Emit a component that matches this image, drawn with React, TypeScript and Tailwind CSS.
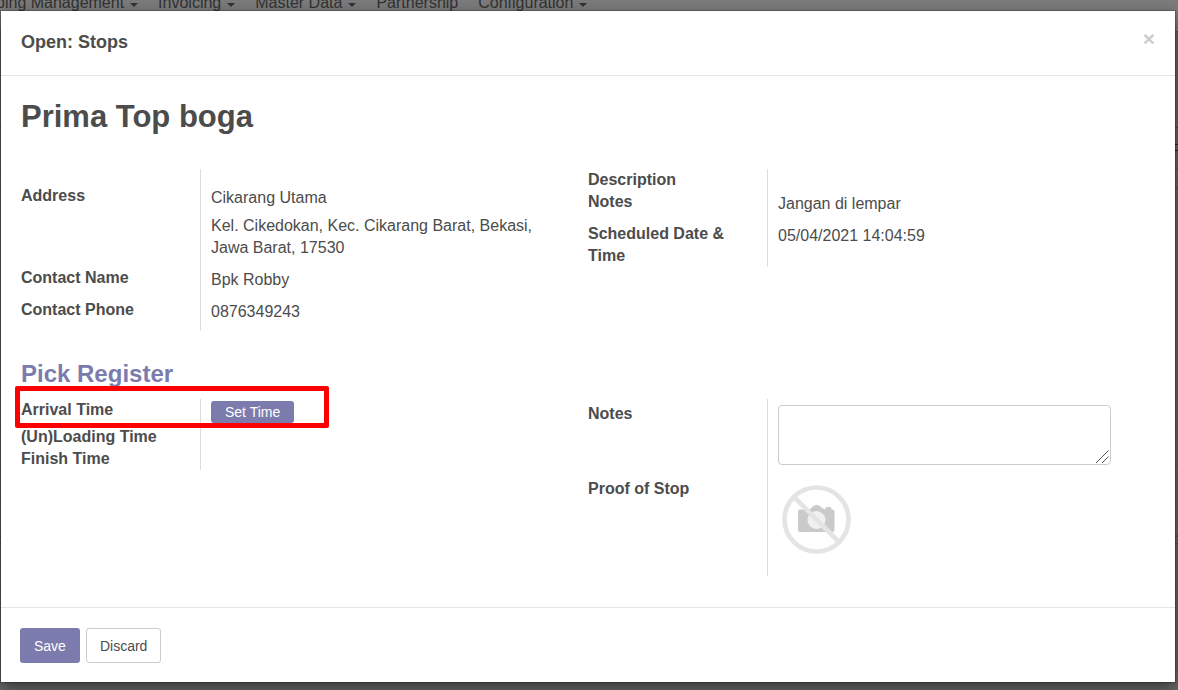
import type { ReactNode } from "react";

const MENU = [
  { name: "Shipping Management", caret: true },
  { name: "Invoicing", caret: true },
  { name: "Master Data", caret: true },
  { name: "Partnership", caret: false },
  { name: "Configuration", caret: true },
];

function BackgroundPage() {
  return (
    <div className="absolute inset-0 overflow-hidden bg-[#cfcfcf]" aria-hidden="true">
      <nav className="-mt-2 -ml-9 flex h-10 items-start gap-5 border-b border-[#b5b5b5] bg-[#f8f8f8] text-[16px] leading-[22px] whitespace-nowrap text-[#666]">
        {MENU.map((item) => (
          <a key={item.name} href="#" tabIndex={-1} className="flex items-center gap-[6px]">
            {item.name}
            {item.caret && (
              <span className="mt-1 border-x-4 border-t-4 border-x-transparent border-t-[#666]" />
            )}
          </a>
        ))}
      </nav>
      <div className="h-24 border-b border-[#999]" />
      <div className="h-4" />
      <div className="flex h-[7px] justify-end">
        <div className="w-[3px] border-y border-[#555]" />
      </div>
      <div className="h-[18px] border-b border-[#aaa]" />
      <div className="h-5 border-b border-[#999]" />
      <div className="h-60 border-b border-[#b5b5b5]" />
      <div className="h-9 border-b border-[#b5b5b5]" />
      <div className="h-9 border-b border-[#b5b5b5]" />
      <div className="h-9 border-b-2 border-[#aaa]" />
      <div className="h-[7px] border-b border-[#aaa]" />
      <div className="h-5 border-b border-[#b5b5b5]" />
      <div className="h-6 border-b border-[#b5b5b5]" />
    </div>
  );
}

function Row({
  label,
  htmlFor,
  labelClass = "pt-[5px]",
  valueClass = "pt-[7px] pb-[3px]",
  children,
}: {
  label: string;
  htmlFor?: string;
  labelClass?: string;
  valueClass?: string;
  children?: ReactNode;
}) {
  return (
    <div className="grid grid-cols-[179px_minmax(0,1fr)]">
      <div className={`pr-10 font-bold whitespace-pre-line ${labelClass}`}>
        {htmlFor ? <label htmlFor={htmlFor}>{label}</label> : label}
      </div>
      <div className={`border-l border-[#ddd] pl-[10px] ${valueClass}`}>{children}</div>
    </div>
  );
}

function NoPhoto() {
  return (
    <svg width="70" height="70" viewBox="0 0 70 70" role="img" aria-label="No photo">
      <path
        d="M18 24.5h8.5c3.500-.5 4-4.500 8-4.500s5 4 9 4.500V23.500q0-1.500 1.500-1.500h3q1.500 0 1.500 1.500v1h1q2 0 2 2V45q0 2-2 2H18q-2 0-2-2V26.500q0-2 2-2z"
        fill="#cacaca"
      />
      <circle cx="34.5" cy="35" r="9" fill="#f0f0f0" />
      <circle cx="34.5" cy="34.500" r="32" fill="none" stroke="#e4e4e4" strokeWidth="4.6" />
      <path d="M12 12L57 57" stroke="#e4e4e4" strokeWidth="4.6" />
    </svg>
  );
}

export default function App() {
  return (
    <div className="relative min-h-screen font-['Liberation_Sans',Arial,sans-serif] text-[16px] leading-[22px] text-[#4c4c4c]">
      <BackgroundPage />
      <div className="relative min-h-screen overflow-hidden bg-black/50 pt-[11px] pr-[3px] pb-2 pl-px">
        <div
          role="dialog"
          aria-labelledby="dialog-title"
          className="bg-white shadow-[0_5px_15px_rgba(0,0,0,0.5),0_0_0_1px_rgba(0,0,0,0.2)]"
        >
          <header className="flex h-[65px] items-start justify-between border-b border-[#e5e5e5] pt-5 pr-5 pl-5">
            <h4 id="dialog-title" className="text-[18px] font-bold">
              Open: Stops
            </h4>
            <button
              type="button"
              aria-label="Close"
              className="-mt-[3px] text-[21px] font-bold text-[#ccc]"
            >
              ×
            </button>
          </header>

          <main className="pt-6 pr-16 pb-[31px] pl-5">
            <h1 className="text-[31px] leading-[34px] font-bold">Prima Top boga</h1>

            <section className="mt-[35px] grid items-start gap-x-11 gap-y-6 md:grid-cols-2">
              <div>
                <Row label="Address" labelClass="pt-4" valueClass="pt-[18px] pb-[3px]">
                  <p>Cikarang Utama</p>
                  <p className="mt-[6px]">
                    Kel. Cikedokan, Kec. Cikarang Barat, Bekasi, Jawa Barat, 17530
                  </p>
                </Row>
                <Row label="Contact Name">Bpk Robby</Row>
                <Row label="Contact Phone" valueClass="pt-[7px] pb-2">
                  0876349243
                </Row>
              </div>
              <div>
                <Row
                  label={"Description\nNotes"}
                  labelClass=""
                  valueClass="pt-6 pb-[3px]"
                >
                  Jangan di lempar
                </Row>
                <Row label={"Scheduled Date &\nTime"}>05/04/2021 14:04:59</Row>
              </div>
            </section>

            <h2 className="mt-[30px] text-[24px] leading-[26px] font-bold text-[#7c7bad]">
              Pick Register
            </h2>

            <section className="mt-3 grid items-start gap-x-11 gap-y-6 md:grid-cols-2">
              <div>
                <div className="relative">
                  <Row label="Arrival Time" labelClass="" valueClass="flex pt-[2px] pb-[3px]">
                    <button
                      type="button"
                      className="h-[22px] rounded-[3px] bg-[#7c7bad] px-[14px] text-[14px] text-white"
                    >
                      Set Time
                    </button>
                  </Row>
                  <div className="pointer-events-none absolute -top-[13px] -left-[6px] h-[42px] w-[314px] rounded-[2px] border-5 border-[#f00]" />
                </div>
                <Row label="(Un)Loading Time" labelClass="whitespace-nowrap" valueClass="" />
                <Row label="Finish Time" labelClass="" valueClass="" />
              </div>
              <div>
                <Row
                  label="Notes"
                  htmlFor="notes"
                  labelClass="pt-1"
                  valueClass="pt-[6px] pb-2"
                >
                  <div className="relative">
                    <textarea
                      id="notes"
                      className="block h-[60px] w-full resize-none rounded-[4px] border border-[#ccc] px-2 py-1 outline-none"
                    />
                    <svg
                      className="pointer-events-none absolute right-[2px] bottom-[2px]"
                      width="13"
                      height="13"
                      viewBox="0 0 13 13"
                      stroke="#555"
                      aria-hidden="true"
                    >
                      <path d="M0 13L12.500 .5M6 13L12.500 6.500" />
                    </svg>
                  </div>
                </Row>
                <Row label="Proof of Stop" labelClass="pt-[5px]" valueClass="pt-3 pb-[21px] flex">
                  <div className="pl-1">
                    <NoPhoto />
                  </div>
                </Row>
              </div>
            </section>
          </main>

          <footer className="flex gap-[6px] border-t border-[#e5e5e5] px-5 pt-5 pb-[19px] text-[14px]">
            <button
              type="button"
              className="-ml-px h-[35px] rounded-[3px] bg-[#7c7bad] px-[14px] text-white"
            >
              Save
            </button>
            <button
              type="button"
              className="h-[35px] rounded-[3px] border border-[#ccc] bg-white px-[13px]"
            >
              Discard
            </button>
          </footer>
        </div>
      </div>
    </div>
  );
}
